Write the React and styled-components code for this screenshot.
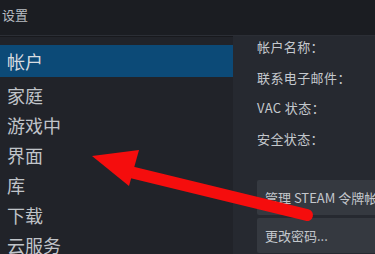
import styled, { createGlobalStyle } from "styled-components";

const GlobalStyle = createGlobalStyle`
  html, body {
    margin: 0;
    padding: 0;
    background: #1c1e23;
  }
  * {
    box-sizing: border-box;
  }
`;

const font = `"Noto Sans CJK SC", "Noto Sans", "Liberation Sans", sans-serif`;

const StyledWindow = styled.div`
  position: relative;
  width: 375px;
  height: 254px;
  overflow: hidden;
  display: flex;
  flex-direction: column;
  background: #1c1e23;
  font-family: ${font};
  color: #c3c7cc;
`;

const StyledTitleBar = styled.header`
  height: 36px;
  flex-shrink: 0;
  display: flex;
  align-items: flex-start;
  padding: 6px 0 0 2px;
  background: #1b1d22;
  border-bottom: 1px solid #2b2e35;
`;

const StyledTitle = styled.h1`
  margin: 0;
  font-size: 13px;
  font-weight: 400;
  line-height: 18px;
  color: #b9bdc2;
`;

const StyledBody = styled.div`
  flex: 1;
  display: flex;
  min-height: 0;
`;

const StyledSidebar = styled.nav`
  width: 233px;
  flex-shrink: 0;
  padding-top: 8px;
  background: #212329;
  border-top: 1px solid #18191d;
`;

const StyledNavItem = styled.div`
  height: ${({ $active }) => ($active ? "32px" : "30px")};
  margin-bottom: ${({ $active }) => ($active ? "3px" : "0")};
  padding-left: 7px;
  display: flex;
  align-items: center;
  font-size: 18px;
  color: ${({ $active }) => ($active ? "#d8dce0" : "#c0c4c9")};
  background: ${({ $active }) => ($active ? "#0c4a77" : "transparent")};
`;

const StyledPanel = styled.section`
  flex: 1;
  padding-left: 24px;
  background: #262930;
  display: flex;
  flex-direction: column;
`;

const StyledField = styled.div`
  height: 30.5px;
  line-height: 22px;
  font-size: 13px;
  letter-spacing: 0.4px;
  color: #c4c8cd;
  white-space: nowrap;
`;

const StyledButtons = styled.div`
  margin-top: 22px;
  display: flex;
  flex-direction: column;
  gap: 3px;
`;

const StyledButton = styled.button`
  width: 140px;
  height: 35px;
  padding: 0 0 0 8px;
  border: none;
  border-radius: 2px 0 0 2px;
  background: #353940;
  color: #c3c7cc;
  font-family: ${font};
  font-size: 13px;
  text-align: left;
  white-space: nowrap;
  overflow: hidden;
`;

const StyledArrow = styled.svg`
  position: absolute;
  left: 0;
  top: 0;
  pointer-events: none;
`;

const navItems = ["帐户", "家庭", "游戏中", "界面", "库", "下载", "云服务"];
const fields = ["帐户名称：", "联系电子邮件：", "VAC 状态：", "安全状态："];

export default function App() {
  return (
    <StyledWindow>
      <GlobalStyle />
      <StyledTitleBar>
        <StyledTitle>设置</StyledTitle>
      </StyledTitleBar>
      <StyledBody>
        <StyledSidebar>
          {navItems.map((item, i) => (
            <StyledNavItem key={item} $active={i === 0}>
              {item}
            </StyledNavItem>
          ))}
        </StyledSidebar>
        <StyledPanel>
          {fields.map((f) => (
            <StyledField key={f}>{f}</StyledField>
          ))}
          <StyledButtons>
            <StyledButton>管理 STEAM 令牌帐户...</StyledButton>
            <StyledButton>更改密码...</StyledButton>
          </StyledButtons>
        </StyledPanel>
      </StyledBody>
      <StyledArrow width="375" height="254" viewBox="0 0 375 254">
        <line x1="122" y1="170" x2="307" y2="215" stroke="#f50d0d" strokeWidth="12" strokeLinecap="round" />
        <polygon points="92,156 139,150 129,186" fill="#f50d0d" />
      </StyledArrow>
    </StyledWindow>
  );
}
